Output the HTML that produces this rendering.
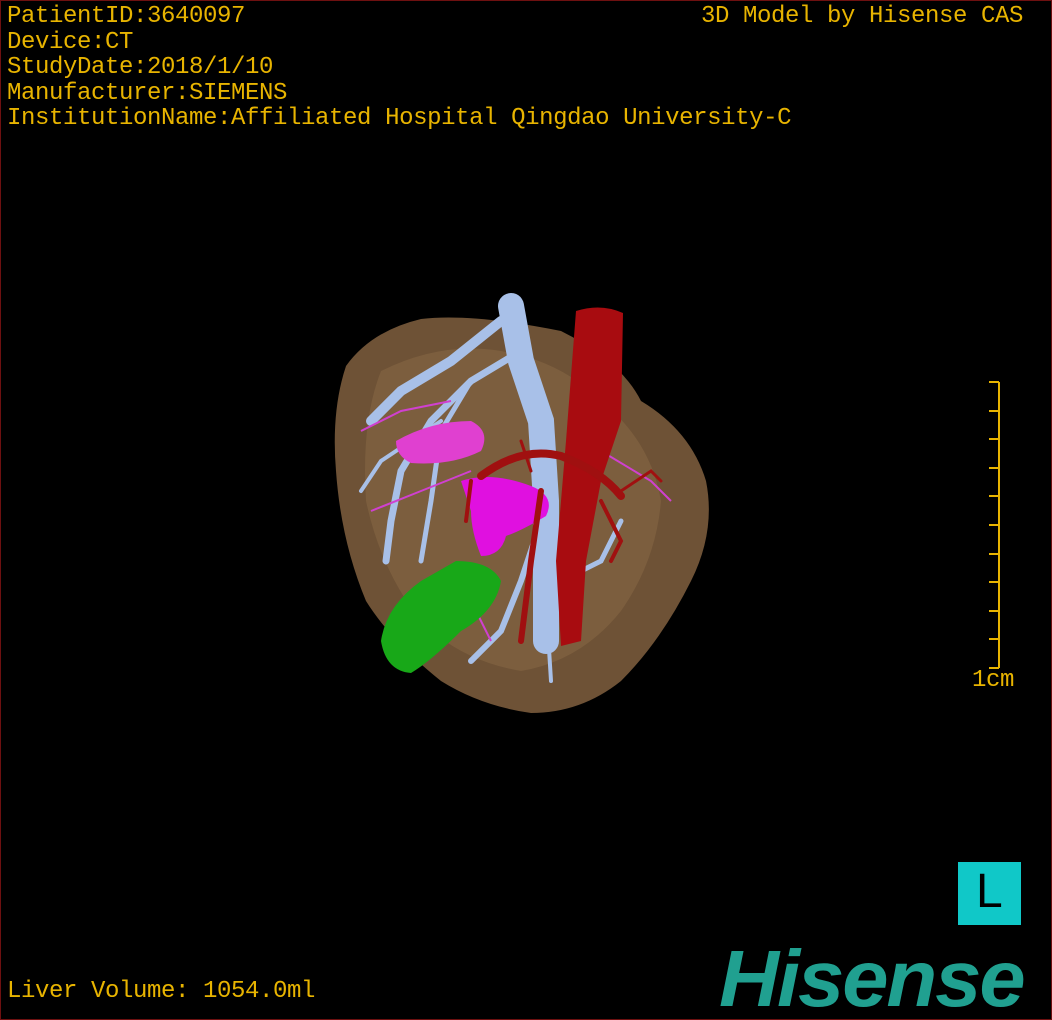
<!DOCTYPE html>
<html><head><meta charset="utf-8"><style>
html,body{margin:0;padding:0;background:#000;}
#f{position:relative;width:1052px;height:1020px;background:#000;overflow:hidden;box-sizing:border-box;border:1px solid #6e1010;}
.t{position:absolute;color:#e8b400;font-family:"Liberation Mono","Noto Sans CJK SC",monospace;font-size:24px;white-space:nowrap;letter-spacing:-0.4px;line-height:25.5px;}
#L{position:absolute;left:957px;top:861px;width:63px;height:63px;background:#10c8c8;}
#L span{position:absolute;left:18px;top:5px;font-family:"Liberation Sans",sans-serif;font-size:48px;color:#000;line-height:50px;}
#logo{position:absolute;left:718px;top:938px;font-family:"Liberation Sans",sans-serif;font-weight:bold;font-style:italic;font-size:80px;color:#20a090;line-height:80px;letter-spacing:-2px;transform:scaleX(1.04);transform-origin:0 0;}
</style></head><body><div id="f">
<div class="t" style="left:6px;top:3px">PatientID:3640097<br>Device:CT<br>StudyDate:2018/1/10<br>Manufacturer:SIEMENS<br>InstitutionName:Affiliated Hospital Qingdao University-C</div>
<div class="t" style="left:700px;top:3px">3D Model by Hisense CAS</div>
<div class="t" style="left:6px;top:978px">Liver Volume: 1054.0ml</div>
<div class="t" style="left:971px;top:667px">1cm</div>
<svg width="1052" height="1020" style="position:absolute;left:0;top:0">
<g stroke="#e8b400" stroke-width="2">
<line x1="998" y1="381" x2="998" y2="667"/>
<line x1="988" y1="381" x2="998" y2="381"/><line x1="988" y1="410" x2="998" y2="410"/><line x1="988" y1="438" x2="998" y2="438"/><line x1="988" y1="467" x2="998" y2="467"/><line x1="988" y1="495" x2="998" y2="495"/><line x1="988" y1="524" x2="998" y2="524"/><line x1="988" y1="553" x2="998" y2="553"/><line x1="988" y1="581" x2="998" y2="581"/><line x1="988" y1="610" x2="998" y2="610"/><line x1="988" y1="638" x2="998" y2="638"/><line x1="988" y1="667" x2="998" y2="667"/>
</g>
<path d="M345 365 Q370 330 420 318 Q470 312 560 330 Q620 360 640 400 Q690 430 705 480 Q715 530 690 580 Q660 640 620 680 Q580 712 530 712 Q480 705 440 680 Q390 640 365 600 Q340 540 335 470 Q330 410 345 365Z" fill="#6e5236"/>
<path d="M380 370 Q440 340 500 350 Q560 360 600 400 Q650 440 660 500 Q655 560 620 610 Q580 660 520 670 Q460 660 420 620 Q380 570 365 500 Q360 420 380 370Z" fill="#8a6a45" opacity="0.5"/>
<g stroke="#a8c0e8" fill="none" stroke-linecap="round">
<path d="M510 305 L520 360 L540 420 L545 500 L545 640" stroke-width="26"/>
<path d="M500 320 L450 360 L400 390 L370 420" stroke-width="10"/>
<path d="M520 350 L470 380 L430 420 L400 470 L390 520 L385 560" stroke-width="7"/>
<path d="M470 380 L440 430 L430 500 L420 560" stroke-width="5"/>
<path d="M540 520 L520 580 L500 630 L470 660" stroke-width="6"/>
<path d="M545 600 L550 680" stroke-width="4"/>
<path d="M560 580 L600 560 L620 520" stroke-width="5"/>
<path d="M440 420 L380 460 L360 490" stroke-width="4"/>
</g>
<path d="M460 480 Q490 470 530 485 Q555 495 545 515 Q520 530 505 535 Q500 555 480 555 Q470 530 470 510Z" fill="#e010e0"/>
<path d="M395 440 Q430 420 470 420 Q490 430 480 450 Q450 465 410 462 Q395 455 395 440Z" fill="#e040d0"/>
<g stroke="#d040d0" stroke-width="2" fill="none"><path d="M360 430 L400 410 L450 400"/><path d="M370 510 L420 490 L470 470"/><path d="M600 450 L650 480 L670 500"/><path d="M470 600 L490 640"/></g>
<path d="M455 560 Q490 560 500 580 Q495 610 460 630 Q430 660 410 672 Q385 670 380 640 Q385 605 420 580Z" fill="#18a818"/>
<path d="M575 310 Q600 302 622 312 L620 420 L600 480 L585 560 L580 640 L560 645 L555 560 L565 440Z" fill="#a80c10"/>
<g stroke="#a01010" fill="none" stroke-linecap="round">
<path d="M480 475 Q520 445 560 455 Q600 470 620 495" stroke-width="8"/>
<path d="M540 490 L530 560 L520 640" stroke-width="6"/>
<path d="M470 480 L465 520" stroke-width="4"/>
<path d="M600 500 L620 540 L610 560" stroke-width="4"/>
<path d="M620 490 L650 470 L660 480" stroke-width="3"/>
<path d="M520 440 L530 470" stroke-width="3"/>
</g>
</svg>
<div id="L"><span>L</span></div>
<div id="logo">Hisense</div>
</div></body></html>
